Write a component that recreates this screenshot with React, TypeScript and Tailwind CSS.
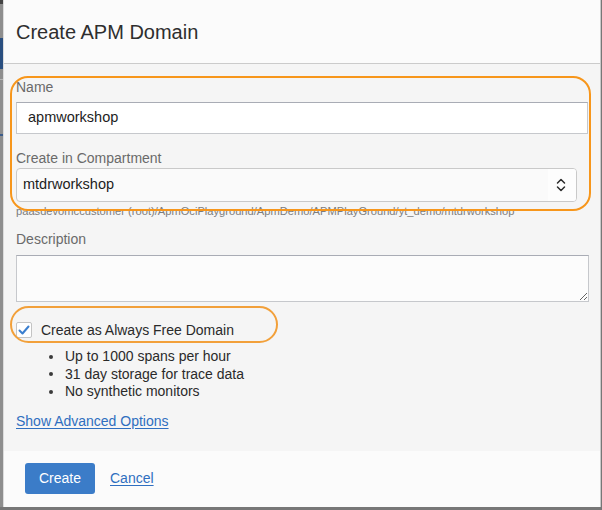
import React from "react";

export default function App() {
  const font = { fontFamily: '"Liberation Sans", Arial, sans-serif' };
  return (
    <div
      className="relative w-[602px] h-[510px] bg-[#777777] flex items-start overflow-hidden"
      style={font}
    >
      {/* background page strip */}
      <div className="w-[3px] h-[507px] bg-[#8e8e8e] flex flex-col">
        <div className="h-[4px] bg-[#444]" />
        <div className="h-[34px]" />
        <div className="h-[31px] bg-[#2a4f80]" />
        <div className="h-[10px]" />
        <div className="h-[1px] bg-[#b5b5b5]" />
        <div className="h-[54px]" />
        <div className="h-[2px] bg-[#3d5d8a]" />
      </div>

      {/* dialog */}
      <div className="w-[598px] h-[507px] flex flex-col bg-[#f5f5f5] border-l border-l-[#dcdcdc] border-r border-r-[#c9c9c9]">
        {/* header */}
        <div className="h-[64px] bg-[#fbfbfb] border-b border-b-[#cbcbcb] pl-[12px] pt-[18px]">
          <div className="text-[20px] leading-[28px] text-[#2e2e2e]">
            Create APM Domain
          </div>
        </div>

        {/* body */}
        <div className="flex-1 pl-[12px] flex flex-col">
          <div className="mt-[13px] text-[14px] leading-[20px] text-[#6a6a6a]">
            Name
          </div>
          <div className="mt-[5px] w-[572px] h-[32px] bg-white border border-[#c6c8cc] border-t-[#a9acb5] flex items-center pl-[11px] text-[14.5px] text-[#1d1d1d]">
            apmworkshop
          </div>

          <div className="mt-[14px] text-[14px] leading-[20px] text-[#6a6a6a]">
            Create in Compartment
          </div>
          <div className="w-[561px] h-[34px] bg-[#fafafa] border border-[#c9c9c9] rounded-[4px] flex items-stretch overflow-hidden">
            <div className="flex-1 flex items-center pl-[6px] text-[14.5px] text-[#1d1d1d]">
              mtdrworkshop
            </div>
            <div className="w-[28px] bg-[#fdfdfd] flex items-center justify-center pr-[2px]">
              <svg width="10" height="16" viewBox="0 0 10 16">
                <path
                  d="M1.5 6 L5 2.5 L8.5 6 M1.5 10 L5 13.5 L8.5 10"
                  fill="none"
                  stroke="#2b2b2b"
                  strokeWidth="1.5"
                  strokeLinecap="round"
                  strokeLinejoin="round"
                />
              </svg>
            </div>
          </div>

          <div className="mt-[2px] text-[11.15px] leading-[14px] text-[#7d7d7d] whitespace-nowrap">
            paasdevomccustomer (root)/ApmOciPlayground/ApmDemo/APMPlayGround/yt_demo/mtdrworkshop
          </div>

          <div className="mt-[11px] text-[14px] leading-[20px] text-[#6a6a6a]">
            Description
          </div>
          <textarea
            className="mt-[6px] w-[573px] h-[47px] bg-[#fcfcfc] border border-[#c6c8cc] border-t-[#a9acb5] outline-none"
            defaultValue=""
          />

          <div className="mt-[20px] flex items-center h-[16px]">
            <div className="w-[16px] h-[16px] bg-white border border-[#c4c4c4] rounded-[2px] flex items-center justify-center">
              <svg width="14" height="14" viewBox="0 0 14 14">
                <path
                  d="M2.5 7.5 L5.5 10.5 L11.5 3.5"
                  fill="none"
                  stroke="#3b7fcf"
                  strokeWidth="2"
                  strokeLinecap="round"
                  strokeLinejoin="round"
                />
              </svg>
            </div>
            <span className="ml-[9px] text-[14px] leading-[16px] text-[#2a2a2a]">
              Create as Always Free Domain
            </span>
          </div>

          <div className="mt-[10px] flex flex-col text-[14px] leading-[17.5px] text-[#2a2a2a]">
            {[
              "Up to 1000 spans per hour",
              "31 day storage for trace data",
              "No synthetic monitors",
            ].map((t) => (
              <div key={t} className="flex items-center">
                <span className="ml-[33px] w-[4px] h-[4px] rounded-full bg-[#3a3a3a]" />
                <span className="ml-[12px]">{t}</span>
              </div>
            ))}
          </div>

          <div className="mt-[10px] text-[14px] leading-[20px] text-[#2f6fc0] underline underline-offset-2">
            Show Advanced Options
          </div>
        </div>

        {/* footer */}
        <div className="h-[56px] bg-[#fbfbfb] flex items-start pt-[12px] pl-[21px]">
          <div className="w-[70px] h-[31px] rounded-[3px] bg-[#3b7cc8] text-white text-[14px] flex items-center justify-center">
            Create
          </div>
          <div className="ml-[15px] h-[31px] flex items-center text-[14px] text-[#2f6fc0] underline underline-offset-2">
            Cancel
          </div>
        </div>
      </div>

      {/* orange highlights */}
      <div className="absolute left-[10px] top-[76px] w-[581px] h-[135px] rounded-[18px] border-[2.5px] border-[#f7961b] pointer-events-none" />
      <div className="absolute left-[10px] top-[306px] w-[268px] h-[37px] rounded-[19px] border-[2.5px] border-[#f2a03a] pointer-events-none" />
    </div>
  );
}
